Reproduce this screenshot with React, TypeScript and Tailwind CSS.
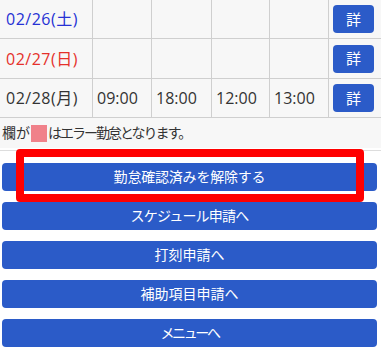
const rows = [
  { date: "02/26(土)", color: "text-[#2631d4]", times: ["", "", "", ""], h: "h-[39px]" },
  { date: "02/27(日)", color: "text-[#e5302b]", times: ["", "", "", ""], h: "h-[40px]" },
  { date: "02/28(月)", color: "text-[#333333]", times: ["09:00", "18:00", "12:00", "13:00"], h: "h-[39px]" },
];

// kana-heavy labels are drawn narrower in the original font
const actions = [
  { label: "勤怠確認済みを解除する", track: "tracking-[-0.2px]" },
  { label: "スケジュール申請へ", track: "tracking-[-0.8px]" },
  { label: "打刻申請へ", track: "tracking-normal" },
  { label: "補助項目申請へ", track: "tracking-normal" },
  { label: "メニューへ", track: "tracking-[-2.4px]" },
];

export default function App() {
  return (
    <div className="relative w-[381px] h-[358px] overflow-hidden bg-white font-['Open_Sans','Noto_Sans_CJK_JP',sans-serif] text-[#333333]">
      {/* Attendance table */}
      <div className="bg-[#f7f7f7]">
        {rows.map((row) => (
          <div
            key={row.date}
            className={`grid grid-cols-[93px_59px_60px_58px_59px_1fr] ${row.h}`}
          >
            <div className={`flex items-center pl-[6px] pr-1 text-[16px] tracking-[0.5px] leading-none border-r border-b border-[#cfcfcf] ${row.color}`}>
              {row.date}
            </div>
            {row.times.map((t, i) => (
              <div
                key={i}
                className="flex items-center px-1 text-[16px] leading-none border-r border-b border-[#cfcfcf]"
              >
                {t}
              </div>
            ))}
            <div className="flex items-center pl-1 border-b border-[#cfcfcf]">
              <button className="w-[41px] h-[28px] rounded-[4px] bg-[#2b5bc8] text-white text-[15px] leading-none">
                詳
              </button>
            </div>
          </div>
        ))}
        <div className="flex items-center h-[30px] pl-[2px] text-[14px] leading-none">
          <span>欄が</span>
          <span className="inline-block w-[16px] h-[17px] bg-[#f0818a] mx-[1px]" />
          <span className="tracking-[-2px]">はエラー勤怠となります。</span>
        </div>
      </div>

      {/* Action buttons */}
      <div className="mt-[2px] border-t border-[#dddddd] pt-[12px] pl-[2px] pr-[4px] flex flex-col gap-[11px]">
        {actions.map((a) => (
          <button
            key={a.label}
            className={`h-[28px] w-full rounded-[4px] bg-[#2b5bc8] text-white text-[14px] leading-none ${a.track}`}
          >
            {a.label}
          </button>
        ))}
      </div>

      {/* Highlight annotation */}
      <div className="absolute left-[16px] top-[149px] w-[348px] h-[53px] border-[8px] border-[#ff0000] rounded-[4px] pointer-events-none" />
    </div>
  );
}
